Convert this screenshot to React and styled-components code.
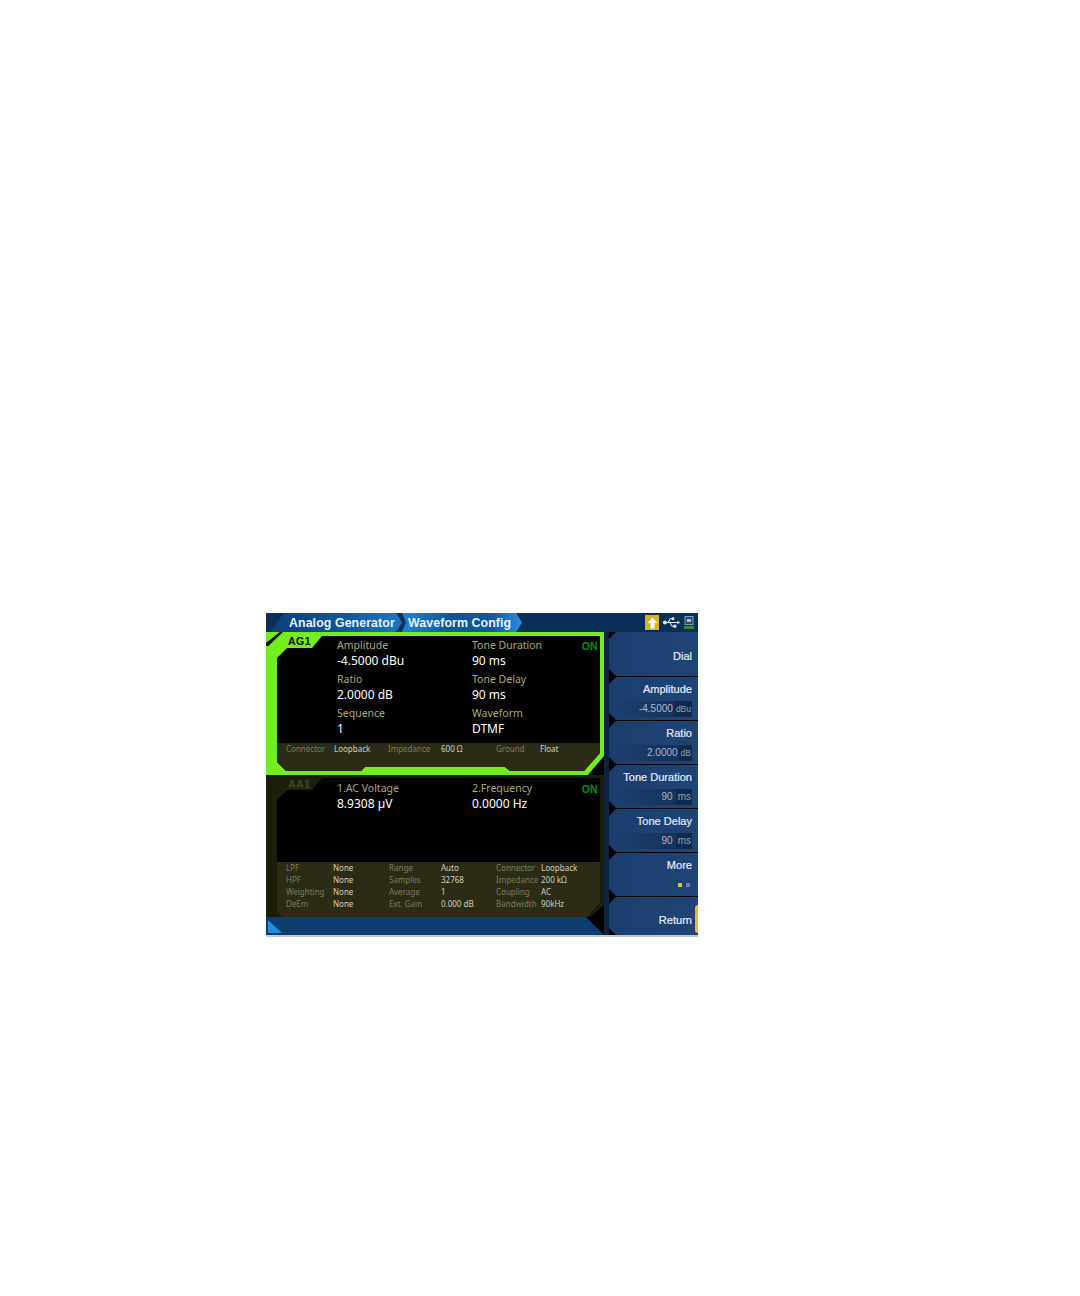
import React from "react";
import styled, { createGlobalStyle } from "styled-components";
import { FaUsb } from "react-icons/fa";

const GlobalStyle = createGlobalStyle`
  html, body {
    margin: 0;
    padding: 0;
    background: #fff;
  }
`;

const Page = styled.div`
  width: 1080px;
  height: 1296px;
  box-sizing: border-box;
  padding: 613px 382px 0 266px;
`;

const Screen = styled.div`
  width: 432px;
  height: 324px;
  display: flex;
  flex-direction: column;
  background: #0b2540;
  border-bottom: 2px solid #c6cacd;
  box-sizing: border-box;
`;

const Header = styled.div`
  height: 19px;
  display: flex;
  align-items: stretch;
  background: #0b2f57;
  position: relative;
`;

const Crumb = styled.div`
  width: ${(p) => p.$w}px;
  flex-shrink: 0;
  box-sizing: border-box;
  margin-left: ${(p) => p.$ml}px;
  padding-left: ${(p) => p.$pl}px;
  display: flex;
  align-items: center;
  background: ${(p) => p.$bg};
  clip-path: ${(p) => p.$clip};
`;

const CrumbText = styled.span`
  color: #e8f2fa;
  font: bold 13.5px/19px "Liberation Sans", Arial, sans-serif;
  letter-spacing: 0.1px;
  white-space: nowrap;
  transform: scaleX(0.915);
  transform-origin: left center;
`;

const StatusIcons = styled.div`
  margin-left: auto;
  padding-right: 4px;
  display: flex;
  align-items: center;
  gap: 4px;
`;

const UpBox = styled.div`
  width: 14px;
  height: 15px;
  background: #d9b21f;
  display: flex;
  align-items: center;
  justify-content: center;
`;

const Main = styled.div`
  flex: 1;
  display: flex;
  gap: 5px;
`;

const LeftCol = styled.div`
  width: 338px;
  display: flex;
  flex-direction: column;
  background: #000;
`;

const Frame = styled.div`
  position: relative;
  height: ${(p) => p.$h}px;
  box-sizing: border-box;
  padding: ${(p) => p.$pad};
  background: ${(p) => p.$bg};
  clip-path: ${(p) => p.$clip};
`;

const Inner = styled.div`
  height: 100%;
  display: flex;
  flex-direction: column;
  background: #000;
  clip-path: ${(p) => p.$clip};
`;

const Stripe = styled.div`
  position: absolute;
  left: 0;
  top: 0;
  width: 17px;
  height: 14px;
  background: #000;
  clip-path: polygon(0 78%, 82% 0, 100% 0, 14% 100%, 0 100%);
`;

const Tag = styled.div`
  position: absolute;
  left: 22px;
  top: 3px;
  font: bold 10.5px/13px "Liberation Sans", Arial, sans-serif;
  letter-spacing: 0.5px;
  color: ${(p) => p.$color};
`;

const OnBadge = styled.div`
  position: absolute;
  right: 6px;
  top: ${(p) => p.$top}px;
  font: bold 10.5px/13px "Liberation Sans", Arial, sans-serif;
  letter-spacing: 0.3px;
  color: #0b7f1c;
  -webkit-text-stroke: 0.3px #0b7f1c;
`;

const Readouts = styled.div`
  flex: 1;
  display: grid;
  grid-template-columns: 135px 135px;
  grid-auto-rows: 34px;
  padding: ${(p) => p.$top}px 0 0 60px;
`;

const Readout = styled.div`
  display: flex;
  flex-direction: column;
`;

const ReadLabel = styled.span`
  font: 10.5px/15px "Noto Sans", Tahoma, sans-serif;
  color: #a9a97f;
  white-space: nowrap;
`;

const ReadValue = styled.span`
  font: 12px/16px "Noto Sans", Tahoma, sans-serif;
  color: #fff;
  white-space: nowrap;
`;

const Footer = styled.div`
  height: ${(p) => p.$h}px;
  box-sizing: border-box;
  padding: ${(p) => p.$pad};
  background: #2b2b16;
  display: grid;
  grid-template-columns: ${(p) => p.$cols};
  grid-auto-rows: 12px;
`;

const Cell = styled.span`
  font: 8px/12px "Noto Sans", Tahoma, sans-serif;
  color: ${(p) => (p.$key ? "#7b7b5c" : "#d0d0c0")};
  white-space: nowrap;
`;

const BottomBar = styled.div`
  flex: 1;
  position: relative;
  background: #0d3c6e;
  clip-path: polygon(0 0, 320px 0, 338px 100%, 0 100%);
`;

const Corner = styled.div`
  position: absolute;
  left: 2px;
  top: 3px;
  width: 14px;
  height: 13px;
  background: #1b8fe0;
  clip-path: polygon(0 0, 100% 100%, 0 100%);
`;

const SoftKeys = styled.div`
  flex: 1;
  display: flex;
  flex-direction: column;
  gap: 1px;
  background: #000;
`;

const Key = styled.div`
  position: relative;
  height: ${(p) => p.$h}px;
  box-sizing: border-box;
  padding: ${(p) => p.$pad};
  display: flex;
  flex-direction: column;
  align-items: flex-end;
  background: linear-gradient(90deg, #1a3e6e, #1f4577);
  clip-path: polygon(7px 0, 100% 0, 100% 100%, 7px 100%, 0 calc(100% - 7px), 0 7px);
`;

const KeyLabel = styled.span`
  font: 11px/14px "Liberation Sans", Arial, sans-serif;
  letter-spacing: 0.02px;
  color: #e6edf5;
  white-space: nowrap;
  -webkit-text-stroke: 0.2px #e6edf5;
`;

const ValueBar = styled.div`
  width: 72px;
  height: 16px;
  margin-top: 5px;
  display: flex;
  justify-content: flex-end;
  align-items: stretch;
  background: linear-gradient(90deg, #1a3e6e, #173a66 30%, #152f54);
`;

const ValueText = styled.span`
  font: 10px/16px "Liberation Sans", Arial, sans-serif;
  color: #a9b8c8;
  padding-right: ${(p) => p.$gap}px;
`;

const Unit = styled.span`
  background: #11294d;
  padding: 0 1px 0 2px;
  font: ${(p) => p.$size}px/16px "Liberation Sans", Arial, sans-serif;
  color: #8fa2b8;
`;

const Dots = styled.div`
  display: flex;
  gap: 4px;
  margin-top: 11px;
  padding-right: 2px;
`;

const Dot = styled.i`
  width: 4px;
  height: 4px;
  background: ${(p) => p.$color};
`;

const ReturnTab = styled.div`
  position: absolute;
  right: 0;
  top: 8px;
  width: 3px;
  height: 28px;
  border-radius: 3px 0 0 3px;
  background: #e9b92c;
`;

const crumb1Clip = "polygon(14px 0, 126px 0, 132px 50%, 126px 100%, 0 100%)";
const crumb2Clip = "polygon(0 0, 114px 0, 120px 50%, 114px 100%, 0 100%, 4px 50%)";

const genReadouts = [
  ["Amplitude", "-4.5000 dBu"],
  ["Tone Duration", "90 ms"],
  ["Ratio", "2.0000 dB"],
  ["Tone Delay", "90 ms"],
  ["Sequence", "1"],
  ["Waveform", "DTMF"],
];

const anaReadouts = [
  ["1.AC Voltage", "8.9308 µV"],
  ["2.Frequency", "0.0000 Hz"],
];

const genFooter = ["Connector", "Loopback", "Impedance", "600 Ω", "Ground", "Float"];

const anaFooter = [
  "LPF", "None", "Range", "Auto", "Connector", "Loopback",
  "HPF", "None", "Samples", "32768", "Impedance", "200 kΩ",
  "Weighting", "None", "Average", "1", "Coupling", "AC",
  "DeEm", "None", "Ext. Gain", "0.000 dB", "Bandwidth", "90kHz",
];

const softKeys = [
  { label: "Amplitude", value: "-4.5000", unit: "dBu", size: 8.5, gap: 1 },
  { label: "Ratio", value: "2.0000", unit: "dB", size: 8.5, gap: 1 },
  { label: "Tone Duration", value: "90", unit: "ms", size: 10, gap: 3 },
  { label: "Tone Delay", value: "90", unit: "ms", size: 10, gap: 3 },
];

const ReadoutGrid = ({ items, top }) => (
  <Readouts $top={top}>
    {items.map(([label, value]) => (
      <Readout key={label}>
        <ReadLabel>{label}</ReadLabel>
        <ReadValue>{value}</ReadValue>
      </Readout>
    ))}
  </Readouts>
);

const FooterCells = ({ items }) =>
  items.map((text, i) => (
    <Cell key={i} $key={i % 2 === 0}>
      {text}
    </Cell>
  ));

const App = () => {
  return (
    <Page>
      <GlobalStyle />
      <Screen>
        <Header>
          <Crumb
            $w={132}
            $ml={4}
            $pl={19}
            $bg="linear-gradient(90deg, #0c3f78, #12599f 60%, #1a78c8)"
            $clip={crumb1Clip}
          >
            <CrumbText>Analog Generator</CrumbText>
          </Crumb>
          <Crumb
            $w={120}
            $ml={0}
            $pl={6}
            $bg="linear-gradient(90deg, #1d84d2, #0f5797 40%, #0f5797 75%, #2a8fe0)"
            $clip={crumb2Clip}
          >
            <CrumbText>Waveform Config</CrumbText>
          </Crumb>
          <StatusIcons>
            <UpBox>
              <svg width="11" height="12" viewBox="0 0 11 12">
                <path d="M5.5 0.5 L10.5 6 H7.5 V11.5 H3.5 V6 H0.5 Z" fill="#fff" />
              </svg>
            </UpBox>
            <FaUsb size={17} color="#e4eef6" />
            <svg width="10" height="13" viewBox="0 0 10 13">
              <rect x="1" y="0.5" width="8" height="8" fill="#1f4f70" stroke="#7f9cae" />
              <rect x="3" y="3" width="4" height="3" fill="#a9c0cc" />
              <rect x="0" y="10" width="10" height="3" fill="#2f8c3a" />
            </svg>
          </StatusIcons>
        </Header>
        <Main>
          <LeftCol>
            <Frame
              $h={143}
              $pad="4px 4px 3px 11px"
              $bg="#72ee1e"
              $clip="polygon(0 0, 100% 0, 100% 124px, 322px 100%, 0 100%)"
            >
              <Inner $clip="polygon(0 22px, 10px 12px, 35px 12px, 45px 0, 100% 0, 100% 117px, 307px 135px, 233px 135px, 228px 131px, 88px 131px, 84px 135px, 9px 135px, 0 126px)">
                <ReadoutGrid items={genReadouts} top={2} />
                <Footer
                  $h={29}
                  $pad="0 0 0 9px"
                  $cols="48px 54px 53px 55px 44px 60px"
                >
                  <FooterCells items={genFooter} />
                </Footer>
              </Inner>
              <Stripe />
              <Tag $color="#000">AG1</Tag>
              <OnBadge $top={8}>ON</OnBadge>
            </Frame>
            <Frame
              $h={142}
              $pad="3px 4px 0 11px"
              $bg="#1d1d0c"
              $clip="polygon(0 0, 100% 0, 100% 130px, 324px 100%, 0 100%)"
            >
              <Inner $clip="polygon(0 22px, 10px 12px, 35px 12px, 45px 0, 100% 0, 100% 125px, 310px 100%, 5px 100%, 0 134px)">
                <ReadoutGrid items={anaReadouts} top={3} />
                <Footer
                  $h={55}
                  $pad="0 0 0 9px"
                  $cols="47px 56px 52px 55px 45px 60px"
                >
                  <FooterCells items={anaFooter} />
                </Footer>
              </Inner>
              <Tag $color="#45452a">AA1</Tag>
              <OnBadge $top={8}>ON</OnBadge>
            </Frame>
            <BottomBar>
              <Corner />
            </BottomBar>
          </LeftCol>
          <SoftKeys>
            <Key $h={44} $pad="17px 6px 0 0">
              <KeyLabel>Dial</KeyLabel>
            </Key>
            {softKeys.map((k) => (
              <Key key={k.label} $h={43} $pad="5px 6px 0 0">
                <KeyLabel>{k.label}</KeyLabel>
                <ValueBar>
                  <ValueText $gap={k.gap}>{k.value}</ValueText>
                  <Unit $size={k.size}>{k.unit}</Unit>
                </ValueBar>
              </Key>
            ))}
            <Key $h={43} $pad="5px 6px 0 0">
              <KeyLabel>More</KeyLabel>
              <Dots>
                <Dot $color="#e2c22c" />
                <Dot $color="#6d86a0" />
              </Dots>
            </Key>
            <Key $h={38} $pad="16px 6px 0 0">
              <KeyLabel>Return</KeyLabel>
              <ReturnTab />
            </Key>
          </SoftKeys>
        </Main>
      </Screen>
    </Page>
  );
};

export default App;
